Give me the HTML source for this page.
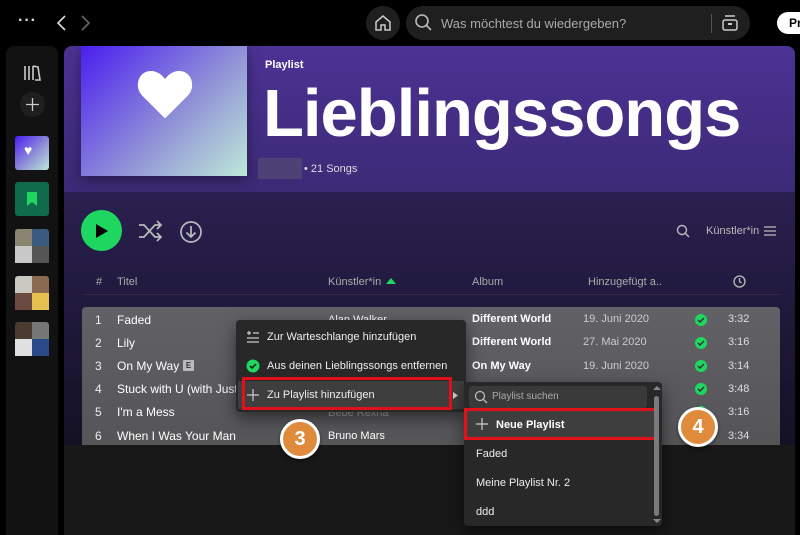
<!DOCTYPE html>
<html><head><meta charset="utf-8"><style>
*{box-sizing:border-box;margin:0;padding:0}
body{width:800px;height:535px;overflow:hidden;background:#000;font-family:"Liberation Sans",sans-serif;color:#fff;position:relative}
.abs{position:absolute}
.t{position:absolute;white-space:nowrap}
</style></head><body>
<!-- top bar -->
<div class="t" style="left:18px;top:12px;font-size:16px;letter-spacing:1px;color:#ddd;font-weight:bold">···</div>
<svg class="abs" style="left:55px;top:14px" width="40" height="18"><path d="M10 2 L3 9 L10 16" stroke="#ddd" stroke-width="1.6" fill="none"/><path d="M27 2 L34 9 L27 16" stroke="#666" stroke-width="1.6" fill="none"/></svg>
<div class="abs" style="left:366px;top:6px;width:34px;height:34px;border-radius:50%;background:#1f1f1f"></div>
<svg class="abs" style="left:374px;top:14px" width="18" height="18"><path d="M2 8 L9 2 L16 8 V16 H11 V11 H7 V16 H2 Z" stroke="#ccc" stroke-width="1.5" fill="none"/></svg>
<div class="abs" style="left:406px;top:6px;width:344px;height:34px;border-radius:17px;background:#1f1f1f"></div>
<svg class="abs" style="left:414px;top:13px" width="20" height="20"><circle cx="8" cy="8" r="6" stroke="#bbb" stroke-width="1.6" fill="none"/><path d="M12.5 12.5 L17 17" stroke="#bbb" stroke-width="1.6"/></svg>
<div class="t" style="left:441px;top:16px;font-size:13px;color:#aaa">Was möchtest du wiedergeben?</div>
<div class="abs" style="left:711px;top:14px;width:1px;height:19px;background:#555"></div>
<svg class="abs" style="left:721px;top:13px" width="18" height="20"><rect x="2" y="7" width="14" height="10" rx="2" stroke="#ccc" stroke-width="1.5" fill="none"/><path d="M4 3 H14" stroke="#ccc" stroke-width="1.5"/><path d="M7 11 H11" stroke="#ccc" stroke-width="2"/></svg>
<div class="abs" style="left:777px;top:12px;width:40px;height:22px;border-radius:11px;background:#fff;color:#000;font-size:12px;font-weight:bold;padding:4px 0 0 12px">Pr</div>

<!-- sidebar -->
<div class="abs" style="left:6px;top:46px;width:52px;height:489px;border-radius:8px 8px 0 0;background:#121212"></div>
<svg class="abs" style="left:23px;top:65px" width="20" height="16"><path d="M2 1 V15 M6 1 V15 M10 1 V15 M10 1 L15 2 L17 15 L12 15" stroke="#ccc" stroke-width="1.6" fill="none"/></svg>
<div class="abs" style="left:20px;top:92px;width:25px;height:25px;border-radius:50%;background:#1f1f1f"></div>
<svg class="abs" style="left:26px;top:98px" width="13" height="13"><path d="M6.5 0 V13 M0 6.5 H13" stroke="#ccc" stroke-width="1.3"/></svg>
<div class="abs" style="left:15px;top:136px;width:34px;height:34px;border-radius:3px;background:linear-gradient(135deg,#4a1ef0,#8f8fd8 55%,#bde8d8)"></div>
<div class="t" style="left:24px;top:142px;font-size:14px">♥</div>
<div class="abs" style="left:15px;top:182px;width:34px;height:34px;border-radius:3px;background:#0f6b4c"></div>
<svg class="abs" style="left:26px;top:191px" width="12" height="16"><path d="M1 1 H11 V15 L6 11 L1 15 Z" fill="#1ed760"/></svg>
<div class="abs" style="left:15px;top:229px;width:34px;height:34px;border-radius:3px;background:linear-gradient(90deg,#8a8570 50%,#3a5a80 50%)"></div>
<div class="abs" style="left:15px;top:246px;width:34px;height:17px;background:linear-gradient(90deg,#c8c8c8 50%,#555 50%)"></div>
<div class="abs" style="left:15px;top:276px;width:34px;height:34px;border-radius:3px;background:linear-gradient(90deg,#c8c8c0 50%,#8a6a50 50%)"></div>
<div class="abs" style="left:15px;top:293px;width:34px;height:17px;background:linear-gradient(90deg,#6a4a40 50%,#e8c050 50%)"></div>
<div class="abs" style="left:15px;top:322px;width:34px;height:34px;border-radius:3px;background:linear-gradient(90deg,#4a3a30 50%,#777 50%)"></div>
<div class="abs" style="left:15px;top:339px;width:34px;height:17px;background:linear-gradient(90deg,#e0e0e0 50%,#2a4a8a 50%)"></div>

<!-- main panel -->
<div class="abs" style="left:64px;top:46px;width:731px;height:489px;border-radius:8px 8px 0 0;overflow:hidden;background:#181818">
  <div class="abs" style="left:0;top:0;width:731px;height:146px;background:linear-gradient(#4c3294,#3c2a76)"></div>
  <div class="abs" style="left:0;top:146px;width:731px;height:253px;background:linear-gradient(#2a2050,#141124)"></div>
</div>
<div class="abs" style="left:81px;top:46px;width:166px;height:130px;background:linear-gradient(135deg,#4a1ef0,#8f8fd8 55%,#bde8d8);box-shadow:0 4px 12px rgba(0,0,0,.4)"></div>
<svg class="abs" style="left:137px;top:69px" width="56" height="50"><path d="M28 48 L6 26 C-2 18 2 3 14 3 C20 3 25 7 28 12 C31 7 36 3 42 3 C54 3 58 18 50 26 Z" fill="#fff" stroke="#fff" stroke-linejoin="round" stroke-width="2"/></svg>
<div class="t" style="left:265px;top:59px;font-size:11px;font-weight:bold">Playlist</div>
<div class="t" style="left:263px;top:76px;font-size:67px;font-weight:bold;letter-spacing:-1px;line-height:76px">Lieblingssongs</div>
<div class="abs" style="left:258px;top:158px;width:44px;height:21px;background:#4e4176"></div>
<div class="t" style="left:304px;top:163px;font-size:11px;color:#ddd">• 21 Songs</div>

<div class="abs" style="left:81px;top:210px;width:41px;height:41px;border-radius:50%;background:#1ed760"></div>
<svg class="abs" style="left:95px;top:224px" width="14" height="14"><path d="M1 0 L13 7 L1 14 Z" fill="#000"/></svg>
<svg class="abs" style="left:138px;top:220px" width="26" height="22"><path d="M1 5 H6 L17 17 H23 M1 17 H6 L17 5 H23 M19 1 L23 5 L19 9 M19 13 L23 17 L19 21" stroke="#bbb" stroke-width="1.7" fill="none"/></svg>
<svg class="abs" style="left:179px;top:220px" width="24" height="24"><circle cx="12" cy="12" r="10" stroke="#bbb" stroke-width="1.7" fill="none"/><path d="M12 6 V17 M7.5 12.5 L12 17 L16.5 12.5" stroke="#bbb" stroke-width="1.7" fill="none"/></svg>
<svg class="abs" style="left:676px;top:224px" width="14" height="14"><circle cx="6" cy="6" r="4.5" stroke="#bbb" stroke-width="1.4" fill="none"/><path d="M9.5 9.5 L13 13" stroke="#bbb" stroke-width="1.4"/></svg>
<div class="t" style="left:706px;top:225px;font-size:11px;color:#bbb">Künstler*in</div>
<svg class="abs" style="left:764px;top:225px" width="12" height="12"><path d="M0 2 H12 M0 6 H12 M0 10 H12" stroke="#bbb" stroke-width="1.3"/></svg>

<div class="t" style="left:96px;top:276px;font-size:11px;color:#aaa">#</div>
<div class="t" style="left:117px;top:276px;font-size:11px;color:#aaa">Titel</div>
<div class="t" style="left:328px;top:276px;font-size:11px;color:#aaa">Künstler*in</div>
<svg class="abs" style="left:386px;top:278px" width="10" height="7"><path d="M0 6 L5 0 L10 6Z" fill="#1ed760"/></svg>
<div class="t" style="left:472px;top:276px;font-size:11px;color:#aaa">Album</div>
<div class="t" style="left:588px;top:276px;font-size:11px;color:#aaa">Hinzugefügt a..</div>
<svg class="abs" style="left:733px;top:275px" width="13" height="13"><circle cx="6.5" cy="6.5" r="5.5" stroke="#bbb" stroke-width="1.3" fill="none"/><path d="M6.5 3 V6.5 L8.5 8" stroke="#bbb" stroke-width="1.3" fill="none"/></svg>
<div class="abs" style="left:82px;top:294px;width:698px;height:1px;background:#2e2a40"></div>

<!-- rows -->
<div class="abs" style="left:82px;top:307px;width:698px;height:138px;border-radius:4px 4px 0 0;background:linear-gradient(#616166,#555558)"></div>
<div style="font-size:12px">
<div class="t" style="left:95px;top:313px;color:#eee">1</div><div class="t" style="left:117px;top:313px">Faded</div><div class="t" style="left:328px;top:314px;font-size:11px">Alan Walker</div>
<div class="t" style="left:95px;top:336px;color:#eee">2</div><div class="t" style="left:117px;top:336px">Lily</div>
<div class="t" style="left:95px;top:359px;color:#eee">3</div><div class="t" style="left:117px;top:359px">On My Way</div><div class="t" style="left:183px;top:360px;width:11px;height:11px;background:#bbb;color:#333;font-size:8px;font-weight:bold;text-align:center;line-height:11px;border-radius:1px">E</div>
<div class="t" style="left:95px;top:382px;color:#eee">4</div><div class="t" style="left:117px;top:382px">Stuck with U (with Just</div>
<div class="t" style="left:95px;top:405px;color:#eee">5</div><div class="t" style="left:117px;top:405px">I'm a Mess</div><div class="t" style="left:328px;top:407px;font-size:11px;color:#aaa">Bebe Rexha</div>
<div class="t" style="left:95px;top:429px;color:#eee">6</div><div class="t" style="left:117px;top:429px">When I Was Your Man</div><div class="t" style="left:328px;top:430px;font-size:11px">Bruno Mars</div>
</div>
<div style="font-size:11px">
<div class="t" style="left:472px;top:313px;font-weight:bold">Different World</div><div class="t" style="left:583px;top:313px;color:#ccc">19. Juni 2020</div>
<div class="t" style="left:472px;top:336px;font-weight:bold">Different World</div><div class="t" style="left:583px;top:336px;color:#ccc">27. Mai 2020</div>
<div class="t" style="left:472px;top:360px;font-weight:bold">On My Way</div><div class="t" style="left:583px;top:360px;color:#ccc">19. Juni 2020</div>
<div class="t" style="left:728px;top:313px;color:#ddd">3:32</div>
<div class="t" style="left:728px;top:336px;color:#ddd">3:16</div>
<div class="t" style="left:728px;top:360px;color:#ddd">3:14</div>
<div class="t" style="left:728px;top:383px;color:#ddd">3:48</div>
<div class="t" style="left:728px;top:406px;color:#ddd">3:16</div>
<div class="t" style="left:728px;top:430px;color:#ddd">3:34</div>
</div>
<svg class="abs" style="left:694px;top:313px" width="14" height="110">
<g fill="#1ed760"><circle cx="7" cy="7" r="6"/><circle cx="7" cy="30" r="6"/><circle cx="7" cy="53" r="6"/><circle cx="7" cy="76" r="6"/><circle cx="7" cy="99" r="6"/></g>
<g stroke="#333" stroke-width="1.5" fill="none"><path d="M4 7 L6 9 L10 5"/><path d="M4 30 L6 32 L10 28"/><path d="M4 53 L6 55 L10 51"/><path d="M4 76 L6 78 L10 74"/></g></svg>

<!-- context menu -->
<div class="abs" style="left:236px;top:320px;width:230px;height:92px;border-radius:4px;background:#282828;box-shadow:0 6px 16px rgba(0,0,0,.5)"></div>
<svg class="abs" style="left:246px;top:330px" width="14" height="14"><path d="M1 3 H5 M3 1 V5 M7 3 H13 M1 8 H13 M1 12 H13" stroke="#ccc" stroke-width="1.2"/></svg>
<div class="t" style="left:267px;top:331px;font-size:11px;color:#eee">Zur Warteschlange hinzufügen</div>
<svg class="abs" style="left:246px;top:359px" width="14" height="14"><circle cx="7" cy="7" r="6.5" fill="#1ed760"/><path d="M4 7 L6 9 L10 5" stroke="#222" stroke-width="1.6" fill="none"/></svg>
<div class="t" style="left:267px;top:360px;font-size:11px;color:#eee">Aus deinen Lieblingssongs entfernen</div>
<div class="abs" style="left:238px;top:381px;width:226px;height:28px;background:#3e3e3e"></div>
<div class="abs" style="left:242px;top:377px;width:210px;height:33px;border:3px solid #e0111a"></div>
<svg class="abs" style="left:247px;top:389px" width="12" height="12"><path d="M6 0 V12 M0 6 H12" stroke="#ccc" stroke-width="1.2"/></svg>
<div class="t" style="left:267px;top:389px;font-size:11px;color:#eee">Zu Playlist hinzufügen</div>
<svg class="abs" style="left:453px;top:392px" width="5" height="7"><path d="M0 0 L5 3.5 L0 7Z" fill="#ccc"/></svg>

<!-- submenu -->
<div class="abs" style="left:464px;top:382px;width:198px;height:144px;border-radius:4px;background:#282828;box-shadow:0 6px 16px rgba(0,0,0,.5)"></div>
<div class="abs" style="left:469px;top:386px;width:178px;height:22px;border-radius:3px;background:#3a3a3a"></div>
<svg class="abs" style="left:474px;top:390px" width="14" height="14"><circle cx="6" cy="6" r="4.5" stroke="#bbb" stroke-width="1.3" fill="none"/><path d="M9.5 9.5 L13 13" stroke="#bbb" stroke-width="1.3"/></svg>
<div class="t" style="left:492px;top:391px;font-size:10px;color:#aaa">Playlist suchen</div>
<div class="abs" style="left:466px;top:410px;width:189px;height:28px;background:#3e3e3e"></div>
<div class="abs" style="left:464px;top:408px;width:193px;height:32px;border:3px solid #e0111a"></div>
<svg class="abs" style="left:476px;top:418px" width="12" height="12"><path d="M6 0 V12 M0 6 H12" stroke="#ccc" stroke-width="1.2"/></svg>
<div class="t" style="left:496px;top:419px;font-size:11px;color:#fff;font-weight:bold">Neue Playlist</div>
<div class="t" style="left:476px;top:448px;font-size:11px;color:#eee">Faded</div>
<div class="t" style="left:476px;top:477px;font-size:11px;color:#eee">Meine Playlist Nr. 2</div>
<div class="t" style="left:476px;top:506px;font-size:11px;color:#eee">ddd</div>
<div class="abs" style="left:654px;top:396px;width:5px;height:120px;border-radius:3px;background:#7a7a7a"></div>
<svg class="abs" style="left:653px;top:385px" width="8" height="140"><path d="M0 5 L4 1 L8 5Z M0 134 L4 138 L8 134Z" fill="#888"/></svg>

<!-- badges -->
<div class="abs" style="left:280px;top:419px;width:40px;height:40px;border-radius:50%;background:#e08a3c;border:3px solid #fff;box-shadow:0 2px 4px rgba(0,0,0,.4);font-size:20px;font-weight:bold;text-align:center;line-height:34px">3</div>
<div class="abs" style="left:678px;top:407px;width:40px;height:40px;border-radius:50%;background:#e08a3c;border:3px solid #fff;box-shadow:0 2px 4px rgba(0,0,0,.4);font-size:20px;font-weight:bold;text-align:center;line-height:34px">4</div>
</body></html>
